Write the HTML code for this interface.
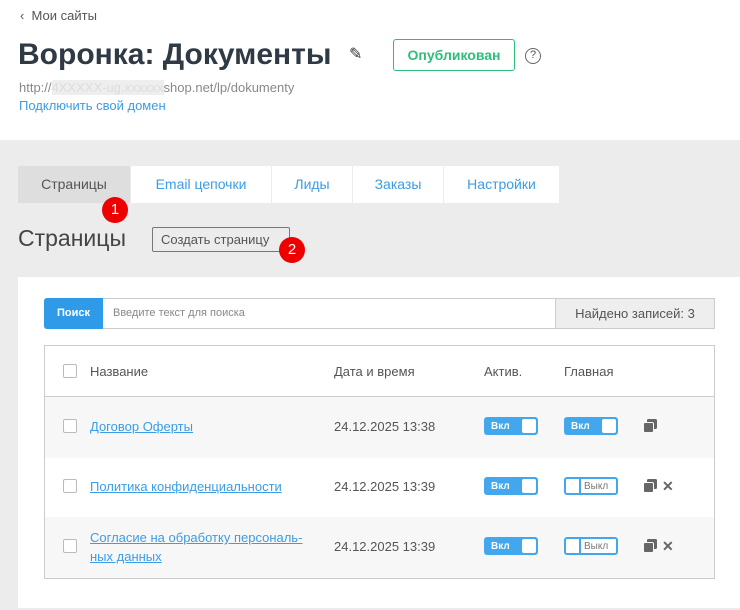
<!DOCTYPE html>
<html><head><meta charset="utf-8"><style>
*{box-sizing:border-box;margin:0;padding:0}
body{width:740px;height:610px;overflow:hidden;font-family:"Liberation Sans",sans-serif;background:#ececec;position:relative;color:#555}
.a{position:absolute}
#top{left:0;top:0;width:740px;height:140px;background:#fff}
.tab{position:absolute;top:166px;height:37px;background:#fff;color:#3a9de6;font-size:14px;text-align:center;line-height:37px}
.badge{position:absolute;width:26px;height:26px;border-radius:50%;background:#e00;color:#fff;font-size:15px;text-align:center;line-height:26px}
.cb{position:absolute;left:63px;width:14px;height:14px;border:1px solid #bbb;border-radius:2px;background:#fff}
.row{position:absolute;left:45px;width:669px;height:61px}
.lnk{position:absolute;left:90px;color:#3a9de6;text-decoration:underline;font-size:13px;line-height:19px}
.dt{position:absolute;left:334px;font-size:13px;color:#555}
.on{position:absolute;width:54px;height:18px;background:#42a7ec;border-radius:3px;border:2px solid #42a7ec;color:#fff;font-size:10px;font-weight:bold;line-height:15px;padding-left:5px}
.on:after{content:"";position:absolute;right:0;top:0;width:14px;height:14px;background:#fff;border-radius:2px}
.off{position:absolute;width:54px;height:18px;background:#fff;border-radius:3px;border:2px solid #42a7ec;color:#777;font-size:10px;line-height:15px;padding-left:18px}
.off:before{content:"";position:absolute;left:13px;top:0;width:2px;height:14px;background:#42a7ec}
.cp{position:absolute;width:14px;height:14px}
.x{position:absolute;font-size:14px;font-weight:bold;color:#666}
</style></head><body>
<div id="top" class="a"></div>
<div class="a" style="left:20px;top:8px;font-size:13px;color:#555">‹&nbsp; Мои сайты</div>
<div class="a" style="left:18px;top:38px;font-size:30px;font-weight:bold;color:#2f3a45">Воронка: Документы</div>
<div class="a" style="left:349px;top:44px;font-size:16px;color:#333">✎</div>
<div class="a" style="left:393px;top:39px;width:122px;height:32px;border:1px solid #2dbe7a;border-radius:3px;color:#2dbe7a;font-weight:bold;font-size:14px;text-align:center;line-height:30px">Опубликован</div>
<div class="a" style="left:525px;top:48px;width:16px;height:16px;border:1.5px solid #666;border-radius:50%;font-size:11px;text-align:center;line-height:13px;color:#555">?</div>
<div class="a" style="left:19px;top:80px;font-size:13px;color:#888">http://<span style="color:#ddd;background:#eee">4XXXXX-ug.xxxxxx</span>shop.net/lp/dokumenty</div>
<div class="a" style="left:19px;top:98px;font-size:13px;color:#3a9de6">Подключить свой домен</div>
<div class="tab" style="left:18px;width:112px;background:#dedede;color:#555">Страницы</div>
<div class="tab" style="left:131px;width:140px">Email цепочки</div>
<div class="tab" style="left:272px;width:80px">Лиды</div>
<div class="tab" style="left:353px;width:90px">Заказы</div>
<div class="tab" style="left:444px;width:115px">Настройки</div>
<div class="badge" style="left:102px;top:197px">1</div>
<div class="a" style="left:18px;top:225px;font-size:23px;color:#444">Страницы</div>
<div class="a" style="left:152px;top:227px;width:138px;height:25px;border:1px solid #777;border-radius:2px;font-size:13px;line-height:23px;padding-left:8px;color:#555">Создать страницу</div>
<div class="badge" style="left:279px;top:237px">2</div>
<div class="a" style="left:18px;top:277px;width:722px;height:331px;background:#fff"></div>
<div class="a" style="left:44px;top:298px;width:671px;height:31px;border:1px solid #ccc;border-radius:3px"></div>
<div class="a" style="left:44px;top:298px;width:59px;height:31px;background:#2f9ae8;border-radius:3px 0 0 3px;color:#fff;font-size:11px;font-weight:bold;line-height:31px;text-align:center">Поиск</div>
<div class="a" style="left:113px;top:307px;font-size:11px;color:#888">Введите текст для поиска</div>
<div class="a" style="left:555px;top:298px;width:160px;height:31px;background:#eee;border:1px solid #ccc;font-size:13px;line-height:29px;text-align:center;color:#555">Найдено записей: 3</div>
<div class="row" style="top:397px;background:#f7f7f7"></div>
<div class="row" style="top:517px;background:#f7f7f7"></div>
<div class="a" style="left:44px;top:345px;width:671px;height:234px;border:1px solid #ccc"></div>
<div class="a" style="left:45px;top:396px;width:669px;height:1px;background:#ccc"></div>
<div class="cb" style="top:364px"></div>
<div class="a" style="left:90px;top:364px;font-size:13px">Название</div>
<div class="a" style="left:334px;top:364px;font-size:13px">Дата и время</div>
<div class="a" style="left:484px;top:364px;font-size:13px">Актив.</div>
<div class="a" style="left:564px;top:364px;font-size:13px">Главная</div>
<div class="cb" style="top:419px"></div><div class="lnk" style="top:417px">Договор Оферты</div><div class="dt" style="top:419px">24.12.2025 13:38</div>
<div class="on" style="left:484px;top:417px">Вкл</div><div class="on" style="left:564px;top:417px">Вкл</div>
<div class="cb" style="top:479px"></div><div class="lnk" style="top:477px">Политика конфиденциальности</div><div class="dt" style="top:479px">24.12.2025 13:39</div>
<div class="on" style="left:484px;top:477px">Вкл</div><div class="off" style="left:564px;top:477px">Выкл</div>
<div class="cb" style="top:539px"></div><div class="lnk" style="top:528px">Согласие на обработку персональ-<br>ных данных</div><div class="dt" style="top:539px">24.12.2025 13:39</div>
<div class="on" style="left:484px;top:537px">Вкл</div><div class="off" style="left:564px;top:537px">Выкл</div>
<svg class="cp" style="left:643px;top:419px" viewBox="0 0 14 14"><rect x="4" y="0" width="10" height="10" rx="1.5" fill="#666"/><rect x="0.5" y="3.5" width="10" height="10" rx="1.5" fill="#666" stroke="#f7f7f7"/></svg>
<svg class="cp" style="left:643px;top:479px" viewBox="0 0 14 14"><rect x="4" y="0" width="10" height="10" rx="1.5" fill="#666"/><rect x="0.5" y="3.5" width="10" height="10" rx="1.5" fill="#666" stroke="#fff"/></svg>
<svg class="cp" style="left:643px;top:539px" viewBox="0 0 14 14"><rect x="4" y="0" width="10" height="10" rx="1.5" fill="#666"/><rect x="0.5" y="3.5" width="10" height="10" rx="1.5" fill="#666" stroke="#f7f7f7"/></svg>
<div class="x" style="left:662px;top:478px">✕</div>
<div class="x" style="left:662px;top:538px">✕</div>
</body></html>
